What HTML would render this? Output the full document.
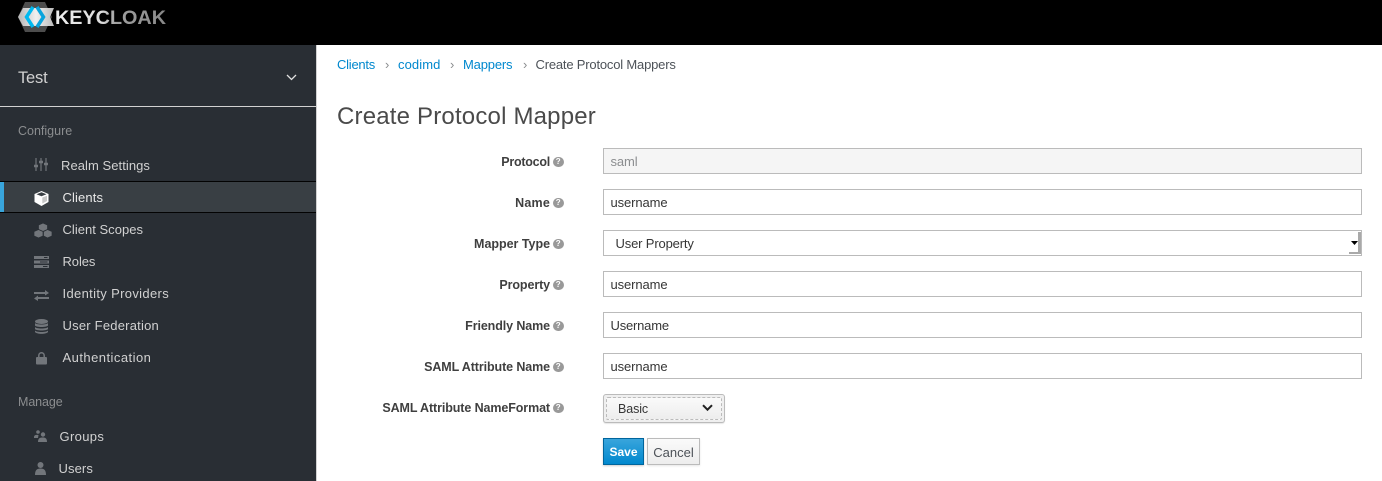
<!DOCTYPE html>
<html><head><meta charset="utf-8"><style>
html,body{margin:0;padding:0;width:1382px;height:481px;overflow:hidden;background:#fff;font-family:"Liberation Sans",sans-serif;font-size:13px;color:#363636}
.a{position:absolute;white-space:nowrap}
#top{left:0;top:0;width:1382px;height:45px;background:#000}
#side{left:0;top:45px;width:316px;height:436px;background:#292e34;border-right:1px solid #d1d1d1}
.nav{color:#d1d1d1;font-size:13px;line-height:16px}
.cap{color:#8b8d8f;font-size:12.5px;line-height:16px;left:18px}
.lab{right:832px;font-weight:bold;color:#3f3f3f;line-height:16px;font-size:12.5px}
.h{position:absolute;left:553px;width:10.5px;height:10.5px;border-radius:50%;background:#999;color:#fff;font:bold 8px/10.5px "Liberation Sans",sans-serif;text-align:center}
.in{left:603px;width:757px;height:24px;border:1px solid #bbb;background:#fff;line-height:26px;text-indent:6.5px;font-size:13px}
.lnk{color:#0088ce;line-height:16px;top:57px}
.sep{color:#8b8d8f;top:56.500px;line-height:16px;font-size:13px}
svg{position:absolute;overflow:visible}
</style></head><body>
<div id="top" class="a"></div>
<svg style="left:0;top:0" width="180" height="40" viewBox="0 0 180 40">
<defs><linearGradient id="g" x1="0" x2="1" y1="0" y2="0"><stop offset="0" stop-color="#eee"/><stop offset=".42" stop-color="#ddd"/><stop offset=".55" stop-color="#a0a0a0"/><stop offset="1" stop-color="#888"/></linearGradient>
<linearGradient id="w" x1="0" x2="1" y1="0" y2="0"><stop offset="0" stop-color="#b5b5b5"/><stop offset=".5" stop-color="#f0f0f0"/><stop offset="1" stop-color="#bbb"/></linearGradient></defs>
<polygon points="25,2 45,2 52,17 45,32 25,32 18,17" fill="#4d4d4d"/>
<polygon points="18,17 23,8 54,8 50,17 54,26 23,26" fill="url(#w)"/>
<path d="M33 7 L26.500 17 L33 27" fill="none" stroke="#00b9f0" stroke-width="3.500"/>
<path d="M37 7 L43.500 17 L37 27" fill="none" stroke="#0aa4dd" stroke-width="3.500"/>
<text x="55" y="24" font-family="Liberation Sans" font-weight="bold" font-size="19.500" fill="url(#g)" textLength="111" lengthAdjust="spacingAndGlyphs">KEYCLOAK</text>
</svg>
<div id="side" class="a"></div>
<div class="a" style="left:18px;top:68px;font-size:16.500px;color:#d1d1d1;line-height:20px;letter-spacing:-.2px">Test</div>
<svg style="left:286px;top:74px" width="11" height="7"><path d="M1 1 L5.500 5.500 L10 1" fill="none" stroke="#e0e0e0" stroke-width="1.300"/></svg>
<div class="a" style="left:0;top:106px;width:316px;height:1px;background:#d1d1d1"></div>
<div class="a cap" style="top:123px;letter-spacing:0">Configure</div>
<div class="a" style="left:0;top:181px;width:316px;height:30px;background:#393f44;border-top:1px solid #030303;border-bottom:1px solid #030303"></div>
<div class="a" style="left:0;top:182px;width:4px;height:30px;background:#39a5dc"></div>
<div class="a nav" style="left:61px;top:158px;letter-spacing:.06px">Realm Settings</div>
<div class="a nav" style="left:62.500px;top:190px;color:#e8e8e8;letter-spacing:.12px">Clients</div>
<div class="a nav" style="left:62.500px;top:222px;letter-spacing:.02px">Client Scopes</div>
<div class="a nav" style="left:62.500px;top:254px;letter-spacing:-.08px">Roles</div>
<div class="a nav" style="left:62.500px;top:286px;letter-spacing:.34px">Identity Providers</div>
<div class="a nav" style="left:62.500px;top:318px;letter-spacing:.22px">User Federation</div>
<div class="a nav" style="left:62.500px;top:350px;letter-spacing:.46px">Authentication</div>
<div class="a cap" style="top:394px;letter-spacing:-.1px">Manage</div>
<div class="a nav" style="left:59.500px;top:429px;letter-spacing:.34px">Groups</div>
<div class="a nav" style="left:58.500px;top:461px;letter-spacing:.1px">Users</div>
<!-- sliders -->
<svg style="left:34px;top:158px" width="14" height="14" fill="none" stroke="#72767b" stroke-width="1.200"><path d="M2 0V13M7 0V13M12 0V13"/><path d="M0 8H4M5 4H9M10 6H14" stroke-width="2.500"/></svg>
<!-- cube -->
<svg style="left:34px;top:191px" width="15" height="15"><path d="M7.500 0 L14.500 3 V11 L7.500 15 L.5 11 V3Z" fill="#fff"/><path d="M2.500 3.300 L7.500 1.300 L12.500 3.300 L7.500 5.300Z" fill="#393f44"/><path d="M8.300 6.500 L13 4.700 V10 L8.300 12.500Z" fill="#c8c8c8"/></svg>
<!-- cubes -->
<svg style="left:34px;top:223px" width="18" height="15" fill="#72767b" stroke="#292e34" stroke-width=".7"><path d="M9 0 L13.500 2 V6.500 L9 8.500 L4.500 6.500 V2Z"/><path d="M4.500 6.500 L9 8.500 V13 L4.500 15 L0 13 V8.500Z"/><path d="M13.500 6.500 L18 8.500 V13 L13.500 15 L9.500 13 V8.500Z"/></svg>
<!-- roles -->
<svg style="left:34px;top:256px" width="15" height="12"><rect width="15" height="3" fill="#72767b"/><rect y="4.500" width="15" height="3" fill="#72767b"/><rect y="9" width="15" height="3" fill="#72767b"/><path d="M10 1.500H13.500M6 6H13.500M9 10.500H13.500" stroke="#292e34"/></svg>
<!-- arrows -->
<svg style="left:34px;top:290px" width="15" height="11" fill="#72767b"><path d="M0 2H11V0L15 3L11 5.500V4H0Z"/><path d="M15 7H4V5.500L0 8.500L4 11V9H15Z"/></svg>
<!-- db -->
<svg style="left:35px;top:319px" width="13" height="15" fill="#72767b"><ellipse cx="6.500" cy="2.500" rx="6.500" ry="2.500"/><path d="M0 4C1 6 12 6 13 4V6.500C12 8.500 1 8.500 0 6.500Z"/><path d="M0 8C1 10 12 10 13 8V10C12 12 1 12 0 10Z"/><path d="M0 11.500C1 13.500 12 13.500 13 11.500V13C11 15.500 2 15.500 0 13Z"/></svg>
<!-- lock -->
<svg style="left:36px;top:352px" width="11" height="12"><rect y="5" width="11" height="7.500" rx="1" fill="#72767b"/><path d="M2.800 6V3.500a2.700 2.700 0 0 1 5.400 0V6" fill="none" stroke="#72767b" stroke-width="1.500"/></svg>
<!-- groups -->
<svg style="left:34px;top:430px" width="13" height="12" fill="#72767b"><circle cx="4" cy="2" r="1.800"/><circle cx="9" cy="4.500" r="2.200"/><path d="M0 7C0 5 2 4.500 4.500 5L4 8H0Z"/><path d="M4 12C4 8 6 7.500 9 7.500C11.500 7.500 13 8.500 13 12Z"/></svg>
<!-- user -->
<svg style="left:35px;top:462px" width="11" height="13" fill="#72767b"><circle cx="5.500" cy="3" r="3"/><path d="M0 13C0 8 2 6.500 5.500 6.500C9 6.500 11 8 11 13Z"/></svg>

<div class="a lnk" style="left:337px;letter-spacing:-.24px">Clients</div><div class="a sep" style="left:385px">›</div>
<div class="a lnk" style="left:398px;letter-spacing:.1px">codimd</div><div class="a sep" style="left:450px">›</div>
<div class="a lnk" style="left:463px;letter-spacing:-.17px">Mappers</div><div class="a sep" style="left:523px">›</div>
<div class="a" style="left:535.500px;top:57px;line-height:16px;color:#4d5258;letter-spacing:-.19px">Create Protocol Mappers</div>
<div class="a" style="left:337px;top:101.500px;font-size:24px;line-height:30px;color:#4a4a4a;letter-spacing:.19px">Create Protocol Mapper</div>

<div class="a lab" style="top:154px;letter-spacing:-.25px">Protocol</div><div class="h" style="top:156.500px">?</div>
<div class="a lab" style="top:195px;letter-spacing:.2px">Name</div><div class="h" style="top:197.500px">?</div>
<div class="a lab" style="top:236px;letter-spacing:-.02px">Mapper Type</div><div class="h" style="top:238.500px">?</div>
<div class="a lab" style="top:277px;letter-spacing:-.1px">Property</div><div class="h" style="top:279.500px">?</div>
<div class="a lab" style="top:318px;letter-spacing:-.1px">Friendly Name</div><div class="h" style="top:320.500px">?</div>
<div class="a lab" style="top:359px;letter-spacing:-.1px">SAML Attribute Name</div><div class="h" style="top:361.500px">?</div>
<div class="a lab" style="top:400px;letter-spacing:-.1px">SAML Attribute NameFormat</div><div class="h" style="top:402.500px">?</div>

<div class="a in" style="top:148px;background:#f5f5f5;color:#8b8d8f;letter-spacing:-.1px">saml</div>
<div class="a in" style="top:189px;letter-spacing:-.1px">username</div>
<div class="a in" style="top:230px;text-indent:11.500px;letter-spacing:-.15px">User Property</div>
<div class="a" style="left:1349px;top:232px;width:9px;height:20px;background:#fff;border-right:3px solid #a9a9a9;border-bottom:2px solid #a9a9a9"></div>
<svg style="left:1351px;top:241px" width="7" height="4"><path d="M0 0H7L3.500 4Z" fill="#000"/></svg>
<div class="a in" style="top:271px;letter-spacing:-.1px">username</div>
<div class="a in" style="top:312px;letter-spacing:-.2px">Username</div>
<div class="a in" style="top:353px;letter-spacing:-.1px">username</div>

<div class="a" style="left:603px;top:394px;width:120px;height:27px;border:1px solid #bbb;border-radius:3px;background:#efefef;box-shadow:0 1px 1px rgba(0,0,0,.1)"></div>
<div class="a" style="left:606px;top:397px;width:114px;height:21px;border:1px dashed #bbb;border-radius:2px;background:linear-gradient(#fafafa,#ededed)"></div>
<div class="a" style="left:618px;top:401px;line-height:16px;font-size:12.500px;letter-spacing:-.1px;color:#363636">Basic</div>
<svg style="left:702px;top:404px" width="11" height="8"><path d="M1 1.200 L5.500 5.700 L10 1.200" fill="none" stroke="#222" stroke-width="2"/></svg>

<div class="a" style="left:603px;top:438px;width:39px;height:25px;border:1px solid #00659c;background:linear-gradient(#39a5dc,#0088ce);color:#fff;font-weight:bold;font-size:12px;line-height:27px;text-align:center;box-shadow:0 1px 2px rgba(0,0,0,.2)">Save</div>
<div class="a" style="left:647px;top:438px;width:51px;height:25px;border:1px solid #bbb;background:linear-gradient(#fafafa,#ededed);color:#4d5258;font-size:13px;line-height:27px;text-align:center;box-shadow:0 1px 2px rgba(0,0,0,.1)">Cancel</div>
</body></html>
